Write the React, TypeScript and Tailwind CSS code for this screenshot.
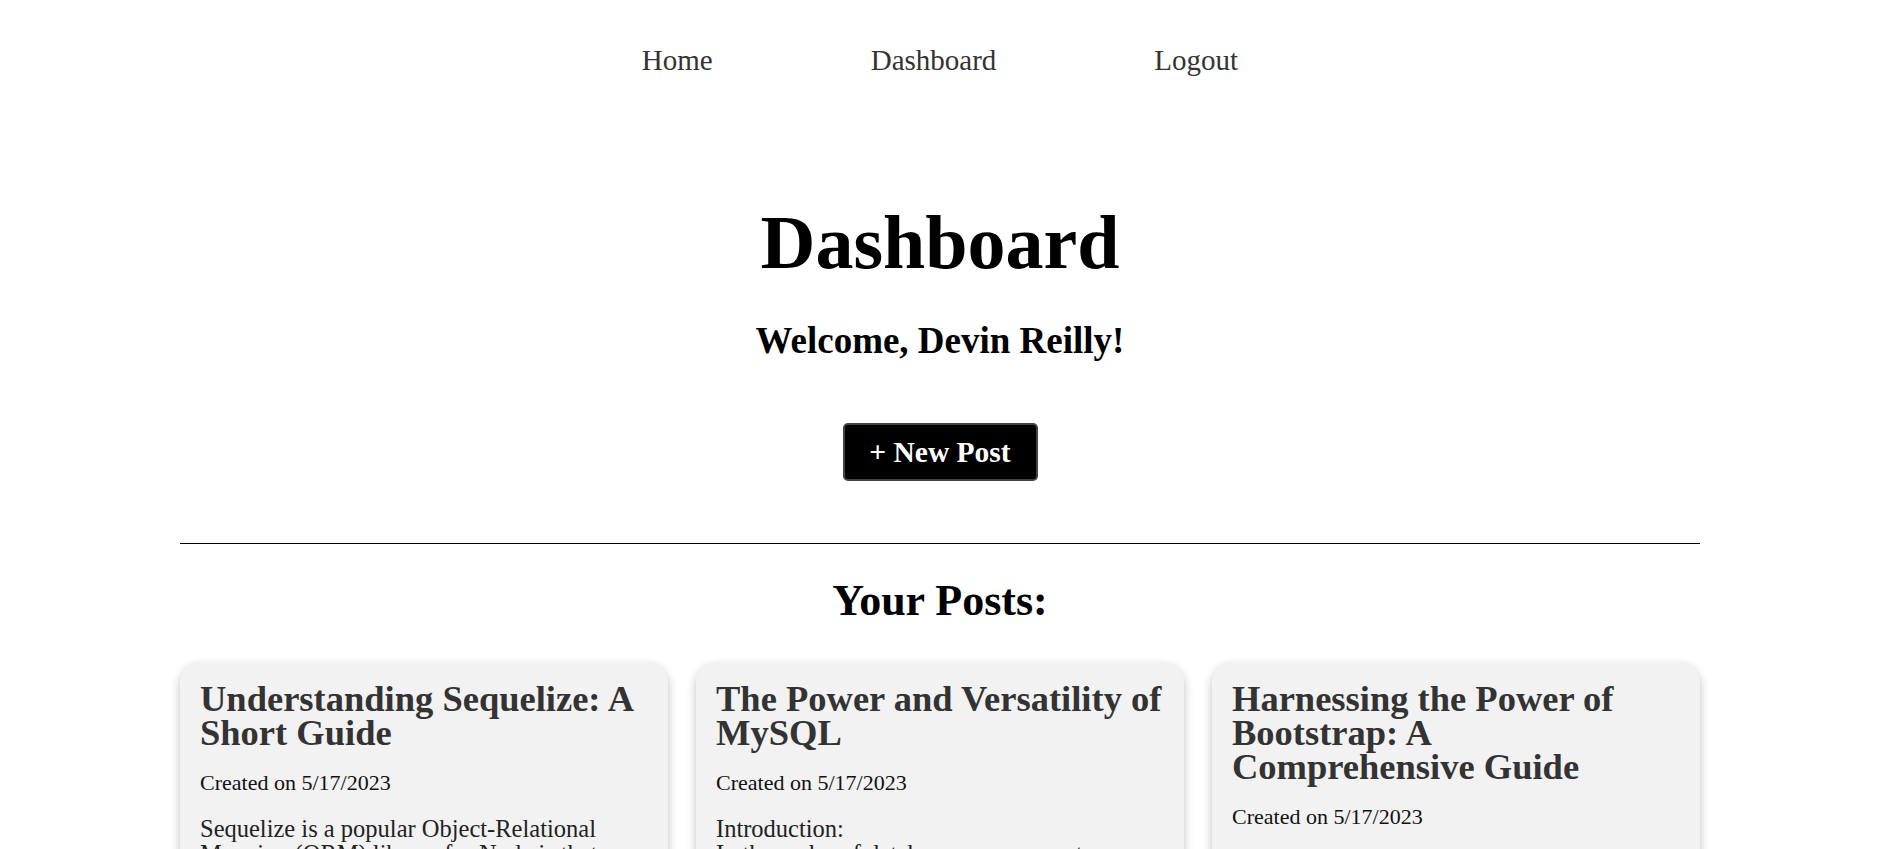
import React from 'react';

interface Post {
  id: number;
  title: string;
  created: string;
  body: string;
}

const posts: Post[] = [
  {
    id: 1,
    title: 'Understanding Sequelize: A Short Guide',
    created: '5/17/2023',
    body: 'Sequelize is a popular Object-Relational Mapping (ORM) library for Node.js that provides an easy way to work with relational databases.',
  },
  {
    id: 2,
    title: 'The Power and Versatility of MySQL',
    created: '5/17/2023',
    body: 'Introduction:\nIn the realm of database management systems, MySQL stands out as one of the most widely used options.',
  },
  {
    id: 3,
    title: 'Harnessing the Power of Bootstrap: A Comprehensive Guide',
    created: '5/17/2023',
    body: 'Introduction:\nBootstrap is a popular front-end framework that makes building responsive websites fast and simple.',
  },
];

const App: React.FC = () => {
  return (
    <div className="min-h-screen bg-white pr-[7px] font-['Liberation_Serif','Times_New_Roman',serif] text-black">
      {/* Top navigation */}
      <nav className="flex justify-center gap-[158px] pt-[43px] text-[29px] leading-[34px] text-[#333]">
        <a href="#" className="hover:underline">Home</a>
        <a href="#" className="hover:underline">Dashboard</a>
        <a href="#" className="hover:underline">Logout</a>
      </nav>

      {/* Header */}
      <header className="flex flex-col items-center">
        <h1 className="mt-[127px] text-[76px] font-bold leading-none">Dashboard</h1>
        <h2 className="mt-[42px] text-[37px] font-bold leading-none">Welcome, Devin Reilly!</h2>
        <button className="mt-[64px] flex h-[58px] w-[195px] items-center justify-center rounded-[5px] border-2 border-[#444] bg-black text-[29.5px] font-bold text-white">
          + New Post
        </button>
      </header>

      <div className="mx-auto mt-[62px] w-[1520px]">
        <hr className="border-t border-black" />

        <h3 className="mt-[35px] text-center text-[44px] font-bold leading-none">Your Posts:</h3>

        {/* Posts grid */}
        <div className="mt-[39px] grid grid-cols-3 gap-[28px]">
          {posts.map((post) => (
            <div
              key={post.id}
              className="rounded-[20px] bg-[#f2f2f2] p-[20px] shadow-[0_4px_10px_rgba(0,0,0,0.25)]"
            >
              <h4 className="text-[36.5px] font-bold leading-[34px] text-[#333]">{post.title}</h4>
              <p className="mt-[20px] text-[22px] leading-[26px] text-[#111]">Created on {post.created}</p>
              <p className="mt-[20px] whitespace-pre-line text-[24.5px] leading-[25px] text-[#222]">{post.body}</p>
            </div>
          ))}
        </div>
      </div>
    </div>
  );
};

export default App;
